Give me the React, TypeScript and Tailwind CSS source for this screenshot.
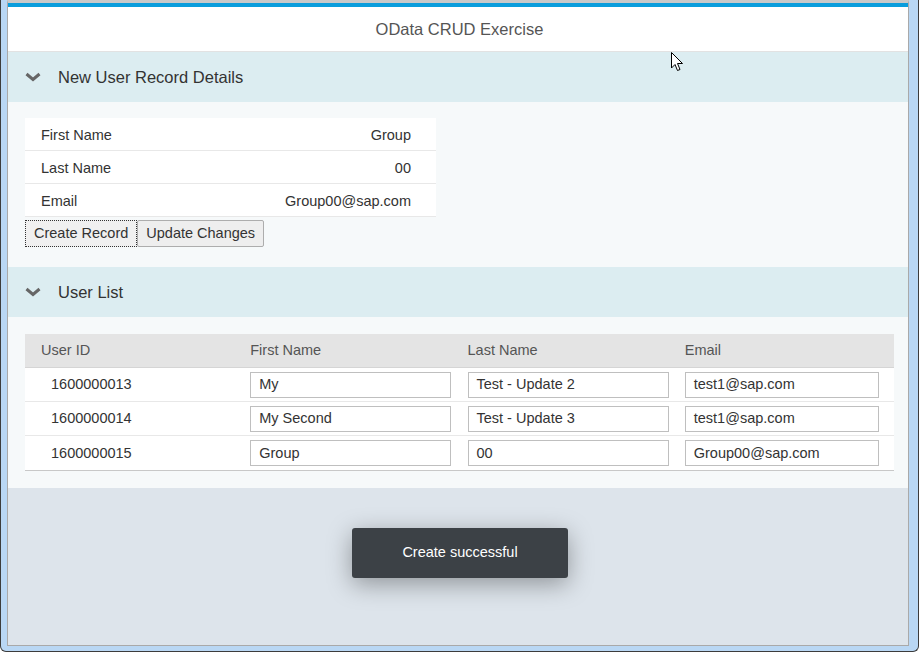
import React from "react";

const users = [
  { id: "1600000013", first: "My", last: "Test - Update 2", email: "test1@sap.com" },
  { id: "1600000014", first: "My Second", last: "Test - Update 3", email: "test1@sap.com" },
  { id: "1600000015", first: "Group", last: "00", email: "Group00@sap.com" },
];

const fields = [
  { label: "First Name", value: "Group" },
  { label: "Last Name", value: "00" },
  { label: "Email", value: "Group00@sap.com" },
];

function Chevron() {
  return (
    <svg width="16" height="10" viewBox="0 0 16 10" className="shrink-0">
      <path d="M1.5 2 L8 7.5 L14.5 2" fill="none" stroke="#666" strokeWidth="3" strokeLinejoin="miter" />
    </svg>
  );
}

function PanelHeader({ title }: { title: string }) {
  return (
    <div className="h-[50px] bg-[#dcedf1] flex items-center pl-[17px] gap-[17px]">
      <Chevron />
      <span className="text-[16.5px] text-[#333]">{title}</span>
    </div>
  );
}

function Cursor() {
  return (
    <svg width="14" height="21" viewBox="0 0 14 21" className="absolute left-[670px] top-[52px]">
      <path
        d="M0.5 0.5 L0.5 16 L4 12.5 L6.5 18.5 L9 17.5 L6.5 11.5 L11.5 11.5 Z"
        fill="#fff"
        stroke="#000"
        strokeWidth="1"
        strokeLinejoin="round"
      />
    </svg>
  );
}

export default function App() {
  return (
    <div
      className="relative w-[919px] h-[652px] bg-[#b9d7f4] border-x border-b border-[#3c3c3c] rounded-b-[6px] pl-[6px] pr-[9px] pb-[5px]"
      style={{ fontFamily: '"Liberation Sans", Arial, sans-serif' }}
    >
      <div className="h-full flex flex-col bg-[#dde4eb] border-x border-b border-t-[3px] border-[#a9a9a9] border-t-[#c9c9c9]">
        <div className="h-[4px] bg-[#0a9ddc]" />
        <div className="h-[45px] bg-white border-b border-[#e2e2e2] flex items-center justify-center pl-[3px]">
          <span className="text-[16.5px] text-[#555]">OData CRUD Exercise</span>
        </div>

        <PanelHeader title="New User Record Details" />
        <div className="h-[165px] bg-[#f6f9fa] pt-[16px] pl-[17px]">
          <div className="w-[411px] bg-white">
            {fields.map((f) => (
              <div
                key={f.label}
                className="h-[33px] border-b border-[#e8e8e8] flex items-center justify-between pl-[16px] pr-[25px] pt-[3px] text-[14.5px] text-[#333]"
              >
                <span>{f.label}</span>
                <span>{f.value}</span>
              </div>
            ))}
          </div>
          <div className="flex mt-[3px]">
            <button className="h-[27px] px-[8px] pt-[1px] bg-[#f0f0f0] border border-dotted border-[#333] text-[14.5px] text-[#333]">
              Create Record
            </button>
            <button className="h-[27px] px-[8px] pt-[1px] bg-[#eeeeee] border border-[#adadad] rounded-[2px] text-[14.5px] text-[#333]">
              Update Changes
            </button>
          </div>
        </div>

        <PanelHeader title="User List" />
        <div className="h-[171px] bg-[#f6f9fa] pt-[17px] pl-[17px] pr-[14px]">
          <div className="border-b border-[#c8c8c8]">
            <div className="grid grid-cols-4 h-[34px] bg-[#e4e4e4] border-b border-[#d5d5d5] items-center text-[14.5px] text-[#555]">
              <span className="pl-[16px]">User ID</span>
              <span className="pl-[8px]">First Name</span>
              <span className="pl-[8px]">Last Name</span>
              <span className="pl-[8px]">Email</span>
            </div>
            {users.map((u, i) => (
              <div
                key={u.id}
                className={`grid grid-cols-4 h-[34px] bg-white items-center text-[14.5px] text-[#333] ${
                  i < users.length - 1 ? "border-b border-[#e8e8e8]" : ""
                }`}
              >
                <span className="pl-[26px] pt-[1px]">{u.id}</span>
                <div className="pl-[8px]">
                  <div className="w-[201px] h-[26px] border border-[#bfbfbf] bg-white flex items-center pl-[8px] pt-[1px]">
                    {u.first}
                  </div>
                </div>
                <div className="pl-[8px]">
                  <div className="w-[201px] h-[26px] border border-[#bfbfbf] bg-white flex items-center pl-[8px] pt-[1px]">
                    {u.last}
                  </div>
                </div>
                <div className="pl-[8px]">
                  <div className="w-[194px] h-[26px] border border-[#bfbfbf] bg-white flex items-center pl-[8px] pt-[1px]">
                    {u.email}
                  </div>
                </div>
              </div>
            ))}
          </div>
        </div>

        <div className="flex-1 flex justify-center pt-[40px] pl-[4px]">
          <div className="w-[216px] h-[50px] bg-[#3c4146] rounded-[3px] flex items-center justify-center text-white text-[14.5px] shadow-[0_6px_24px_rgba(0,0,0,0.35)]">
            Create successful
          </div>
        </div>
      </div>
      <Cursor />
    </div>
  );
}
